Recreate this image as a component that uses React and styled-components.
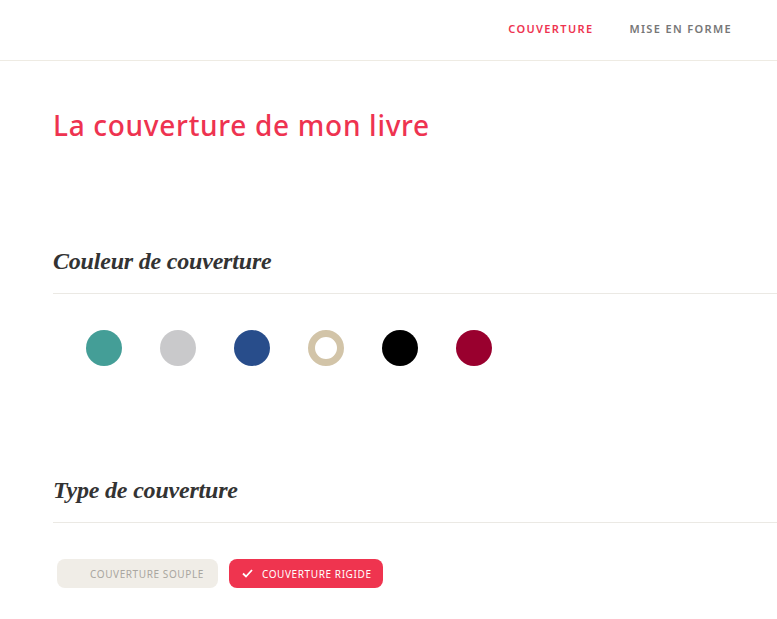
import React from "react";
import styled, { createGlobalStyle } from "styled-components";

const Global = createGlobalStyle`
  html, body { margin: 0; padding: 0; background: #fff; }
  body { font-family: "Noto Sans", sans-serif; }
`;

const Header = styled.header`
  height: 60px;
  border-bottom: 1px solid #eeebe3;
  display: flex;
  justify-content: flex-end;
  align-items: center;
  padding-right: 45px;
  gap: 36px;
`;

const NavLink = styled.a`
  font-family: "Noto Sans", sans-serif;
  font-size: 11px;
  font-weight: 600;
  letter-spacing: 1.35px;
  text-transform: uppercase;
  color: ${p => (p.$active ? "#ee3350" : "#777")};
  text-decoration: none;
  margin-top: -4px;
`;

const Main = styled.main`
  padding-left: 53px;
`;

const Title = styled.h1`
  margin: 0;
  padding-top: 46px;
  font-family: "Noto Sans", sans-serif;
  font-weight: 500;
  font-size: 28px;
  line-height: 36px;
  letter-spacing: 0.7px;
  color: #ee3350;
`;

const Section = styled.section`
  margin-top: ${p => p.$top}px;
`;

const SectionTitle = styled.h2`
  margin: 0;
  font-family: "Liberation Serif", serif;
  font-style: italic;
  font-weight: 700;
  font-size: 24px;
  line-height: 28px;
  letter-spacing: -0.2px;
  color: #333;
  padding-bottom: 18px;
  border-bottom: 1px solid #ebe9e4;
`;

const Swatches = styled.div`
  display: flex;
  gap: 38px;
  padding: 36px 0 0 33px;
`;

const Swatch = styled.span`
  width: 36px;
  height: 36px;
  border-radius: 50%;
  box-sizing: border-box;
  background: ${p => (p.$ring ? "#fff" : p.$color)};
  border: ${p => (p.$ring ? `7px solid ${p.$color}` : "none")};
`;

const Buttons = styled.div`
  display: flex;
  gap: 11px;
  padding: 36px 0 0 4px;
`;

const TypeButton = styled.button`
  height: 29px;
  border: none;
  border-radius: 8px;
  display: flex;
  align-items: center;
  gap: 9px;
  padding: ${p => (p.$active ? "0 11px 0 13px" : "0 14px 0 33px")};
  font-family: "Noto Sans", sans-serif;
  font-size: 10px;
  letter-spacing: 0.6px;
  text-transform: uppercase;
  background: ${p => (p.$active ? "#ef344f" : "#f0ede7")};
  color: ${p => (p.$active ? "#fff" : "#a9a6a0")};
`;

const colors = [
  { c: "#449e97" },
  { c: "#c9c9cb" },
  { c: "#284d8b" },
  { c: "#d2c4a8", ring: true },
  { c: "#000000" },
  { c: "#99002e" },
];

export default function App() {
  return (
    <>
      <Global />
      <Header>
        <NavLink $active>Couverture</NavLink>
        <NavLink>Mise en forme</NavLink>
      </Header>
      <Main>
        <Title>La couverture de mon livre</Title>
        <Section $top={104}>
          <SectionTitle>Couleur de couverture</SectionTitle>
          <Swatches>
            {colors.map((s, i) => (
              <Swatch key={i} $color={s.c} $ring={s.ring} />
            ))}
          </Swatches>
        </Section>
        <Section $top={110}>
          <SectionTitle>Type de couverture</SectionTitle>
          <Buttons>
            <TypeButton>Couverture souple</TypeButton>
            <TypeButton $active>
              <svg width="11" height="9" viewBox="0 0 11 9" fill="none">
                <path d="M1 4.5 L4 7.5 L10 1" stroke="#fff" strokeWidth="1.8" />
              </svg>
              Couverture rigide
            </TypeButton>
          </Buttons>
        </Section>
      </Main>
    </>
  );
}
